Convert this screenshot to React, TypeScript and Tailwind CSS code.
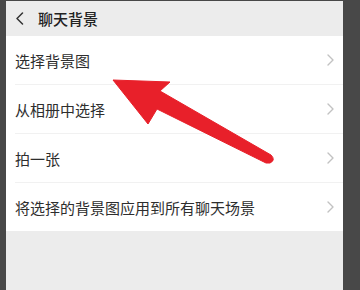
const rows = ["选择背景图", "从相册中选择", "拍一张", "将选择的背景图应用到所有聊天场景"]

function Chevron() {
  return (
    <svg width="7" height="12" viewBox="0 0 7 12" fill="none">
      <path d="M1 1l5 5-5 5" stroke="#c2c2c2" strokeWidth="1.4" strokeLinecap="round" strokeLinejoin="round" />
    </svg>
  )
}

export default function App() {
  return (
    <div
      className="relative w-[360px] h-[290px] bg-[#484848] pt-[1px] pl-[6px] pr-[17px] overflow-hidden"
      style={{ fontFamily: '"Noto Sans CJK SC", "Noto Sans", sans-serif' }}
    >
      <div className="flex flex-col h-full bg-[#ececec]">
        <div className="flex items-center h-[35px] pl-[9px] gap-[14px]">
          <svg width="9" height="13" viewBox="0 0 9 13" fill="none">
            <path d="M7.5 1L2 6.5 7.5 12" stroke="#333" strokeWidth="1.5" strokeLinecap="round" strokeLinejoin="round" />
          </svg>
          <span className="text-[15px] font-medium text-[#222] leading-none">聊天背景</span>
        </div>
        <div className="bg-white">
          {rows.map((r, i) => (
            <div key={r} className="pl-[9px]">
              <div
                className={`flex items-center justify-between pr-[9px] text-[15px] text-[#2e2e2e] ${
                  i < rows.length - 1 ? "h-[49px] border-b border-[#f1f1f1]" : "h-[48px]"
                }`}
              >
                <span className="pt-[3px]">{r}</span>
                <Chevron />
              </div>
            </div>
          ))}
        </div>
      </div>
      <svg className="absolute left-0 top-0" width="360" height="290" viewBox="0 0 360 290">
        <path
          d="M113 80 L170 82 L160 91 L271 155 Q276 160 270 163 L266 163 L157 109 L148 124 Z"
          fill="#e8202a"
          stroke="#e8202a"
          strokeWidth="1"
          strokeLinejoin="round"
        />
      </svg>
    </div>
  )
}
